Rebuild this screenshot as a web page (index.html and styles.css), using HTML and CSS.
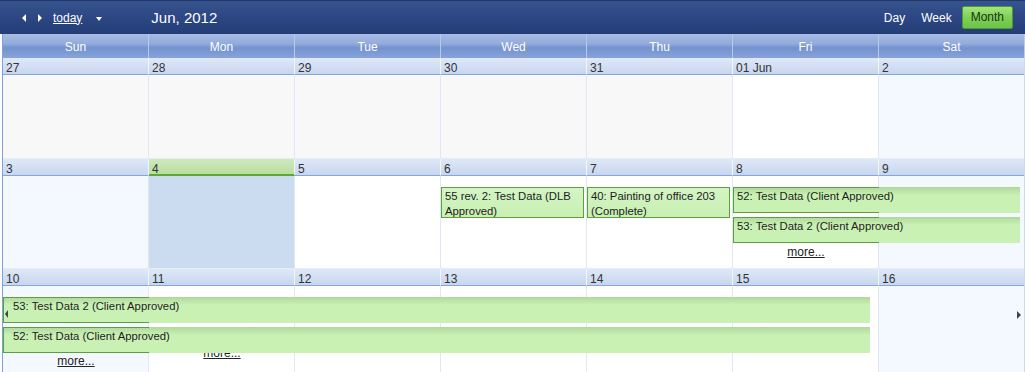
FILE: index.html
```html
<!DOCTYPE html>
<html>
<head>
<meta charset="utf-8">
<link rel="stylesheet" href="styles.css">
</head>
<body>
<div class="toolbar">
  <div class="nav">
    <span class="arr arr-l"></span>
    <span class="arr arr-r"></span>
    <a class="today-link">today</a>
    <span class="caret"></span>
    <span class="title">Jun, 2012</span>
  </div>
  <div class="views">
    <span class="view v-day">Day</span>
    <span class="view v-week">Week</span>
    <span class="view active">Month</span>
  </div>
</div>
<div class="cal">
  <div class="daynames">
    <div>Sun</div><div>Mon</div><div>Tue</div><div>Wed</div><div>Thu</div><div>Fri</div><div class="last">Sat</div>
  </div>

  <div class="week w1">
    <div class="days">
      <div class="cell other"><div class="dh">27</div><div class="db"></div></div>
      <div class="cell other"><div class="dh">28</div><div class="db"></div></div>
      <div class="cell other"><div class="dh">29</div><div class="db"></div></div>
      <div class="cell other"><div class="dh">30</div><div class="db"></div></div>
      <div class="cell other"><div class="dh">31</div><div class="db"></div></div>
      <div class="cell"><div class="dh">01 Jun</div><div class="db"></div></div>
      <div class="cell weekend last"><div class="dh">2</div><div class="db"></div></div>
    </div>
  </div>

  <div class="week w2">
    <div class="days">
      <div class="cell weekend"><div class="dh">3</div><div class="db"></div></div>
      <div class="cell is-today"><div class="dh">4</div><div class="db"></div></div>
      <div class="cell"><div class="dh">5</div><div class="db"></div></div>
      <div class="cell"><div class="dh">6</div><div class="db"></div></div>
      <div class="cell"><div class="dh">7</div><div class="db"></div></div>
      <div class="cell"><div class="dh">8</div><div class="db"></div></div>
      <div class="cell weekend last"><div class="dh">9</div><div class="db"></div></div>
    </div>
    <div class="ev single e-wed">55 rev. 2: Test Data (DLB<br>Approved)</div>
    <div class="ev single e-thu">40: Painting of office 203<br>(Complete)</div>
    <div class="ev multi e-fri1">52: Test Data (Client Approved)</div>
    <div class="ev multi e-fri2">53: Test Data 2 (Client Approved)</div>
    <a class="more m-fri">more...</a>
  </div>

  <div class="week w3">
    <div class="days">
      <div class="cell weekend"><div class="dh">10</div><div class="db"></div></div>
      <div class="cell"><div class="dh">11</div><div class="db"></div></div>
      <div class="cell"><div class="dh">12</div><div class="db"></div></div>
      <div class="cell"><div class="dh">13</div><div class="db"></div></div>
      <div class="cell"><div class="dh">14</div><div class="db"></div></div>
      <div class="cell"><div class="dh">15</div><div class="db"></div></div>
      <div class="cell weekend last"><div class="dh">16</div><div class="db"></div></div>
    </div>
    <a class="more m-mon">more...</a>
    <div class="ev multi wide e-w3a"><span class="cont-l"></span>53: Test Data 2 (Client Approved)</div>
    <div class="ev multi wide e-w3b">52: Test Data (Client Approved)</div>
    <a class="more m-sun">more...</a>
    <span class="cont-r"></span>
  </div>
</div>
</body>
</html>
```

FILE: styles.css
```css
* { box-sizing: border-box; }

body {
  margin: 0;
  width: 1025px;
  height: 372px;
  overflow: hidden;
  background: #fff;
  font-family: "Liberation Sans", Arial, sans-serif;
  font-size: 12px;
  color: #333;
}

/* toolbar */
.toolbar {
  height: 34px;
  display: flex;
  align-items: center;
  justify-content: space-between;
  padding: 0 12px 0 22px;
  color: #fff;
  background: linear-gradient(#37548e 0%, #2d4884 45%, #243d77 100%);
  border-top: 1px solid #22376a;
}
.nav { display: flex; align-items: center; }
.arr {
  width: 0; height: 0;
  border-top: 4px solid transparent;
  border-bottom: 4px solid transparent;
}
.arr-l { border-right: 4px solid #fff; }
.arr-r { border-left: 4px solid #fff; margin-left: 12px; }
.today-link {
  margin-left: 11px;
  color: #fff;
  text-decoration: underline;
  font-size: 12px;
}
.caret {
  margin-left: 14px;
  width: 0; height: 0;
  border-left: 3.5px solid transparent;
  border-right: 3.5px solid transparent;
  border-top: 4px solid #fff;
  margin-top: 2px;
}
.title {
  margin-left: 49px;
  font-size: 15px;
}
.views { display: flex; align-items: center; }
.view { font-size: 12px; }
.v-day { margin-right: 16px; }
.v-week { margin-right: 10px; }
.view.active {
  height: 23px;
  line-height: 21px;
  padding: 0 8px;
  color: #1b3410;
  border: 1px solid #4f9a2c;
  border-radius: 2px;
  background: linear-gradient(#a2e47c, #7fd058 50%, #6cc445);
}

/* calendar */
.cal {
  margin-left: 2px;
  width: 1023px;
  border-left: 1px solid #7ea3d8;
}
.daynames {
  display: grid;
  grid-template-columns: repeat(7, 146px);
  height: 24px;
  background: linear-gradient(#a8bce3 0%, #93abdd 40%, #7392cf 58%, #88a3d9 100%);
}
.daynames div {
  color: #fff;
  text-align: center;
  line-height: 24px;
  padding-top: 1px;
  border-right: 1px solid #b9c9e8;
}
.daynames div.last { border-right-color: #c3cbd8; }

.week { position: relative; }
.w1 { height: 101px; }
.w2 { height: 110px; }
.w3 { height: 104px; }
.days {
  display: grid;
  grid-template-columns: repeat(7, 146px);
  height: 100%;
}
.cell {
  display: flex;
  flex-direction: column;
  border-right: 1px solid #dfe8f5;
}
.cell.last { border-right-color: #d3d9e2; }
.dh {
  height: 17px;
  padding: 4px 0 0 3px;
  line-height: 13px;
  font-size: 12px;
  color: #333;
  background: linear-gradient(#dee8f8, #c8d6ee);
  border-bottom: 1px solid #84a6da;
  border-right: 1px solid #f2f6fc;
  margin-right: -1px;
  white-space: nowrap;
}
.cell.last .dh { margin-right: 0; border-right: 0; }
.db {
  flex: 1;
  background: #fff;
  border-bottom: 1px solid #e6edf7;
}
.cell.other .db { background: #f8f8f8; }
.cell.weekend .db { background: #f3f9fe; }
.cell.is-today .db { background: #cbdbf0; }
.cell.is-today .dh {
  background: linear-gradient(#cde9bb, #b7dfa0);
  border-bottom: 2px solid #5ea733;
}

/* events */
.ev {
  position: absolute;
  font-size: 11.3px;
  line-height: 15px;
  color: #1d1d1d;
  white-space: nowrap;
  overflow: hidden;
}
.ev.single {
  top: 28px;
  width: 143px;
  height: 31px;
  padding: 1px 0 0 3px;
  border: 1px solid #5e9f3d;
  background: linear-gradient(#d5f4c5, #c7f0b2);
}
.e-wed { left: 438px; }
.e-thu { left: 584px; }
.ev.multi {
  height: 26px;
  padding: 2px 0 0 4px;
  background: linear-gradient(#b0d89c 0px, #c9f1b4 8px, #c9f1b4 100%);
}
.ev.multi::before {
  content: "";
  position: absolute;
  left: 0; top: 0; bottom: 0;
  width: 145px;
  border: 1px solid #5e9f3d;
  border-right: 0;
}
.e-fri1 { left: 730px; top: 28px; width: 287px; }
.e-fri2 { left: 730px; top: 58px; width: 287px; }
.ev.wide { left: 0; width: 867px; padding-left: 10px; }
.e-w3a { top: 28px; }
.e-w3b { top: 58px; }

.cont-l {
  position: absolute;
  left: 2px; top: 13px;
  width: 0; height: 0;
  border-top: 4px solid transparent;
  border-bottom: 4px solid transparent;
  border-right: 3px solid #444;
}
.cont-r {
  position: absolute;
  left: 1014px; top: 42px;
  width: 0; height: 0;
  border-top: 4px solid transparent;
  border-bottom: 4px solid transparent;
  border-left: 4px solid #444;
}

.more {
  position: absolute;
  width: 146px;
  text-align: center;
  font-size: 12px;
  line-height: 14px;
  color: #222;
  text-decoration: underline;
}
.m-fri { left: 730px; top: 86px; }
.m-sun { left: 0; top: 85px; }
.m-mon { left: 146px; top: 77px; }
```
